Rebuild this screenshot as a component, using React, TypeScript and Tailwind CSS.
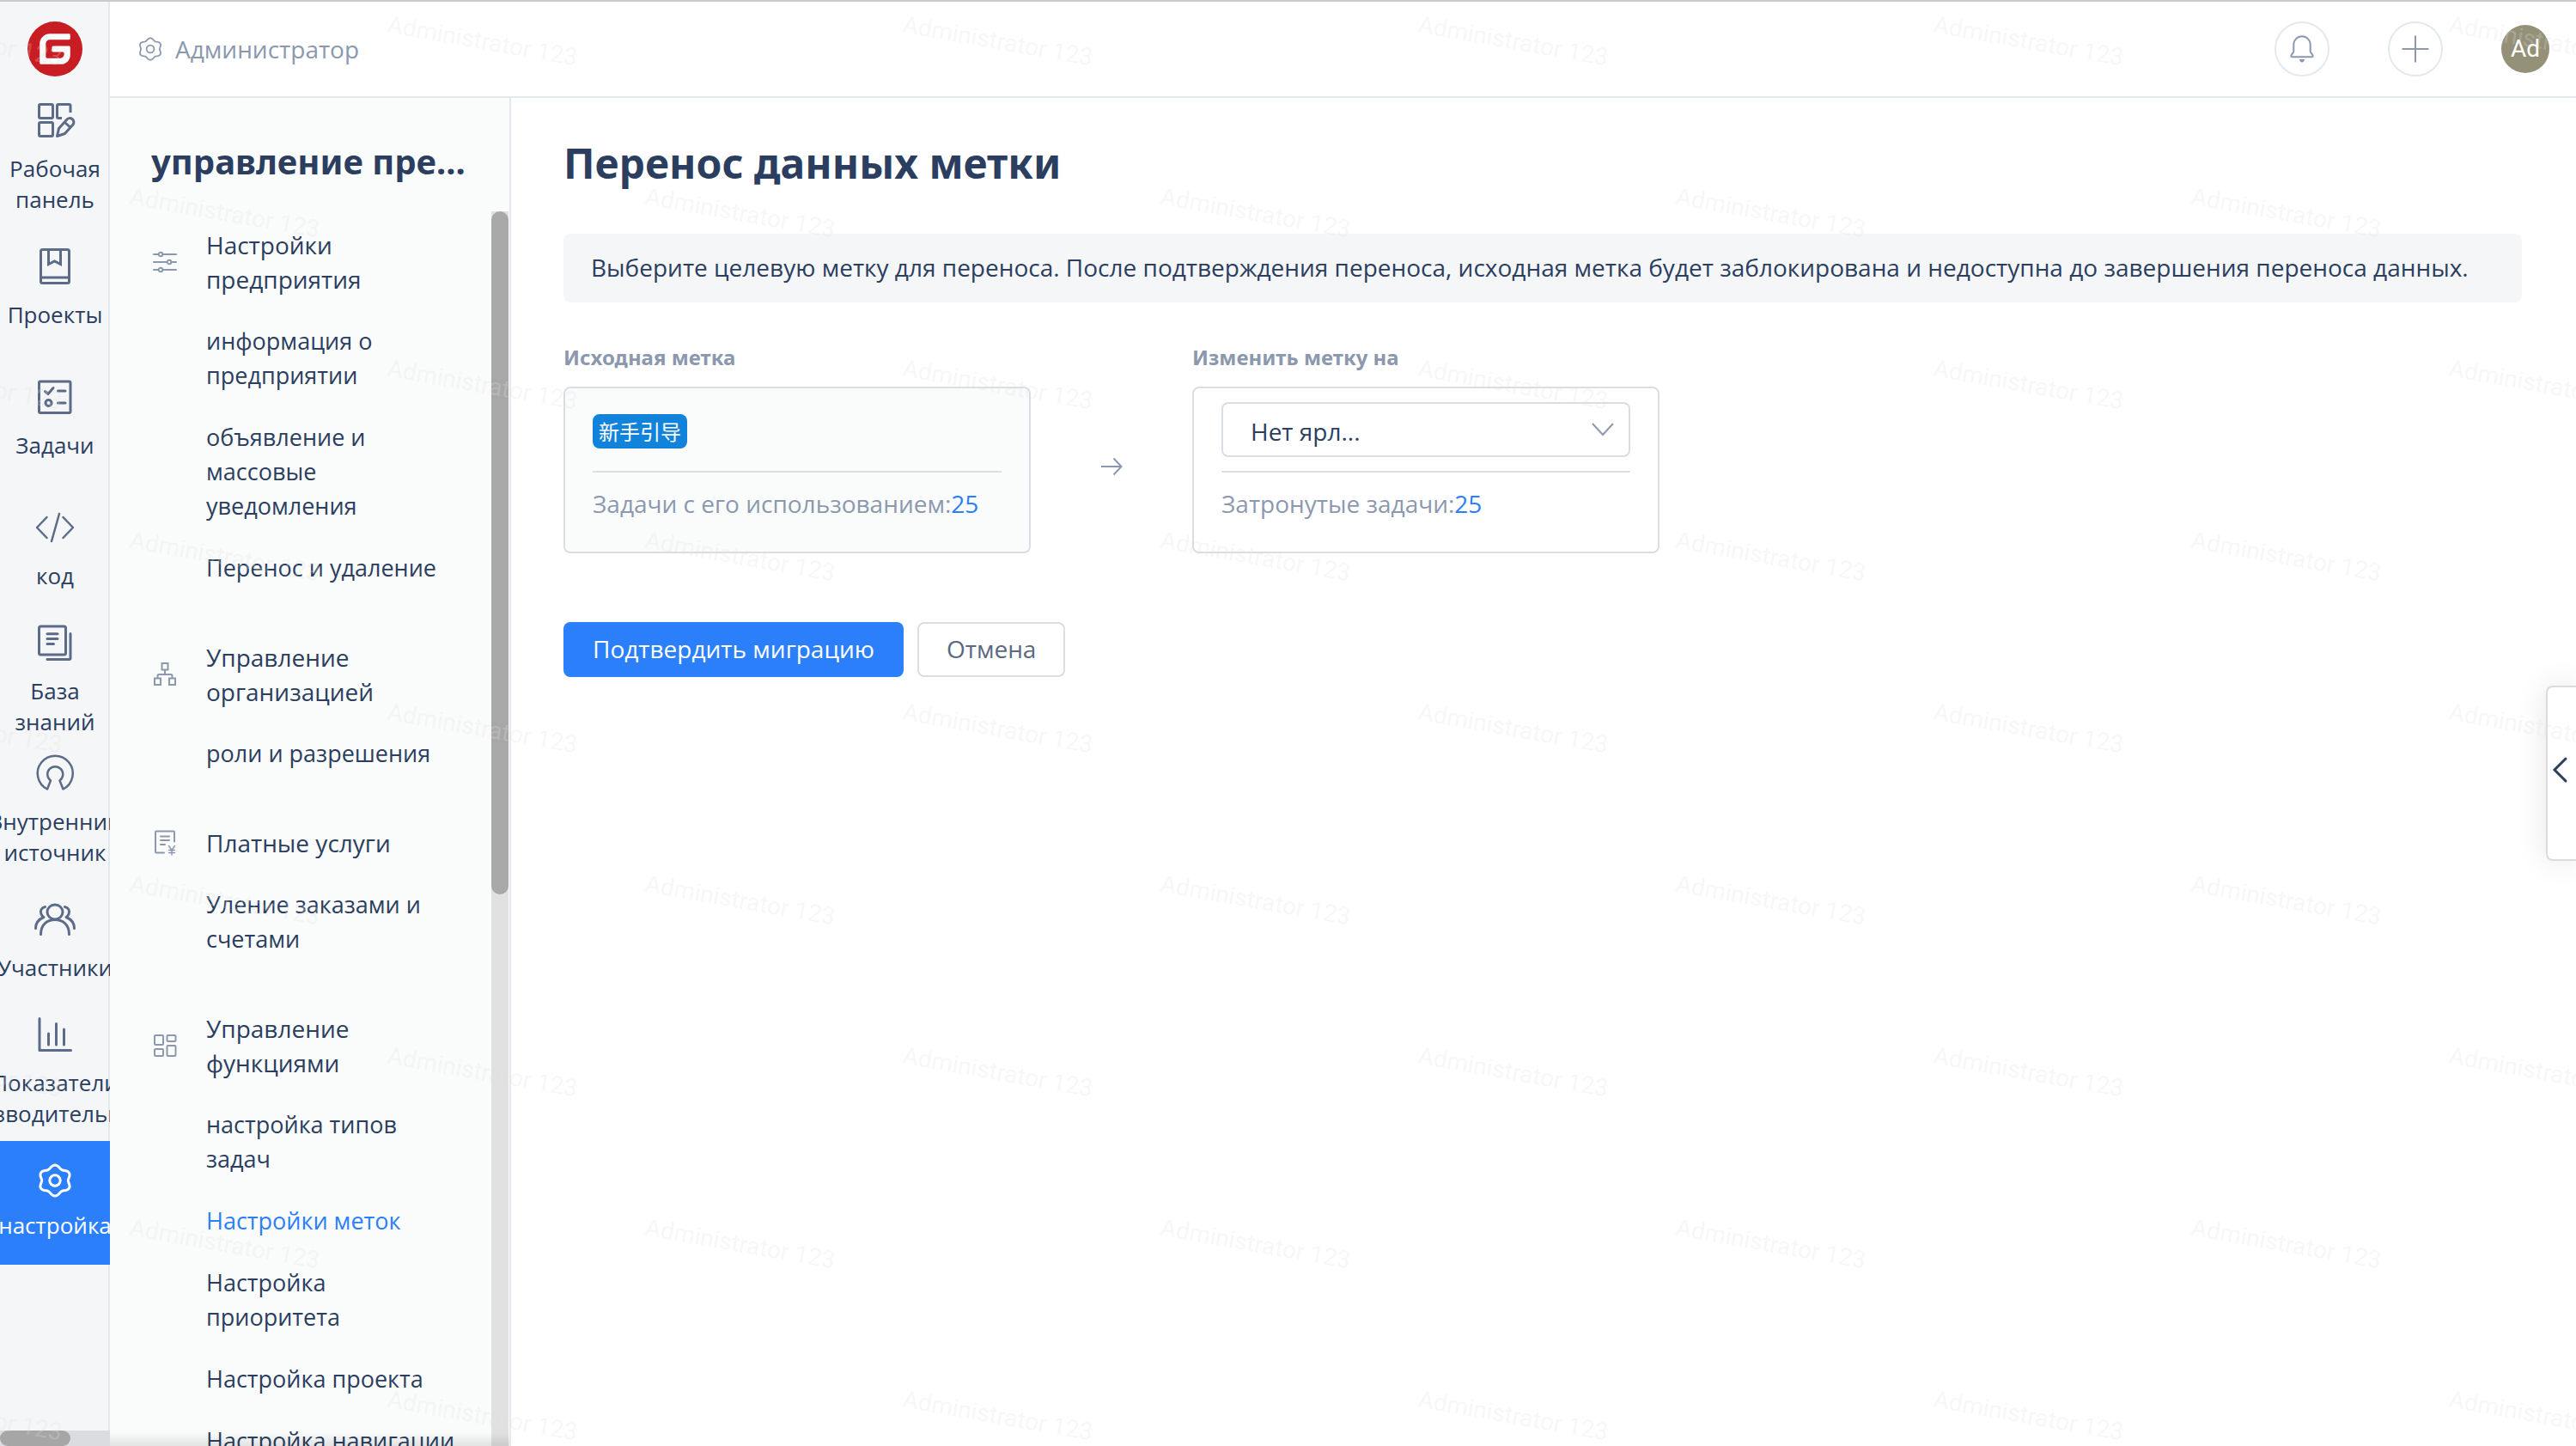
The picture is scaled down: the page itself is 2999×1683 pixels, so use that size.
import React from 'react';
import { SiGitee } from 'react-icons/si';

type IconProps = { children: React.ReactNode; size?: 'nav' | 'menu' };

function Icon({ children, size = 'nav' }: IconProps) {
  const nav = size === 'nav';
  return (
    <svg
      aria-hidden="true"
      viewBox={nav ? '0 0 48 48' : '0 0 32 32'}
      className={nav ? 'size-12 shrink-0' : 'size-8 shrink-0'}
      fill="none"
      stroke="currentColor"
      strokeWidth={nav ? 3 : 2}
      strokeLinecap="round"
      strokeLinejoin="round"
    >
      {children}
    </svg>
  );
}

// Six-lobed cog outline centred in a 48px box.
const cogPath =
  Array.from({ length: 120 }, (_, i) => {
    const a = (i / 120) * Math.PI * 2;
    const r = 16.2 + 1.7 * Math.cos(6 * (a - Math.PI / 2));
    const x = (24 + r * Math.cos(a) * 1.06).toFixed(2);
    const y = (24 + r * Math.sin(a)).toFixed(2);
    return `${i ? 'L' : 'M'}${x} ${y}`;
  }).join('') + 'Z';

const Cog = () => (
  <>
    <path d={cogPath} />
    <circle cx="24" cy="24" r="6.2" />
  </>
);

const navItems: { lines: string[]; icon: React.ReactNode; active?: boolean }[] = [
  {
    lines: ['Рабочая', 'панель'],
    icon: (
      <>
        <rect x="5.5" y="5.5" width="16" height="16" rx="1.5" />
        <rect x="5.5" y="26.5" width="16" height="16" rx="1.5" />
        <path d="M42 15V7a1.5 1.5 0 0 0-1.5-1.5H28A1.5 1.5 0 0 0 26.5 7v13a1.5 1.5 0 0 0 1.5 1.5h4" strokeLinecap="butt" />
        <path d="M26.5 42.5L28.5 33.5 37.5 23.5a4.6 4.6 0 0 1 7.5 5.5L35.5 39.5Z M35.5 26.5l6 5.5" />
      </>
    ),
  },
  {
    lines: ['Проекты'],
    icon: (
      <>
        <rect x="7.5" y="4.5" width="33" height="39" rx="2" />
        <path d="M7.5 37h33M16.5 4.5v17l7-3.5 7 3.5v-17" strokeLinejoin="miter" />
      </>
    ),
  },
  {
    lines: ['Задачи'],
    icon: (
      <>
        <rect x="5.5" y="6" width="36.5" height="36.5" rx="1.5" />
        <path d="M12.5 17.5l3.5 3 6-7M27.5 17h8.5M27.5 31h8.5" />
        <circle cx="16.5" cy="31" r="3.5" />
      </>
    ),
  },
  {
    lines: ['код'],
    icon: <path d="M14.5 12L3 24l11.5 12M33.5 12L45 24 33.5 36M29 8l-9 32" strokeWidth="2.5" />,
  },
  {
    lines: ['База', 'знаний'],
    icon: (
      <>
        <rect x="5.5" y="5" width="31" height="33" rx="2" />
        <path d="M42 13.5V42a1.5 1.5 0 0 1-1.5 1.5H15M15 13.8h12M15 19.6h12M15 25.4h7.5" />
      </>
    ),
  },
  {
    lines: ['Внутренний', 'источник'],
    icon: (
      <path
        d="M15 42.5A20.5 20.5 0 1 1 33.5 42.5L29.5 32.5A9 9 0 1 0 19 32.5Z"
        strokeWidth="2.5"
      />
    ),
  },
  {
    lines: ['Участники'],
    icon: (
      <>
        <ellipse cx="24" cy="15.5" rx="9" ry="8.5" />
        <path d="M7.5 41.5C7.5 31 14 24.5 24 24.5S40.5 31 40.5 41.5" />
        <path d="M12.5 9.5C8 10.5 6.5 14 8 18c.6 1.6 1.5 2.6 3 3.5C5 24 1.5 28 1.5 34.5" />
        <path d="M35.5 9.5C40 10.5 41.5 14 40 18c-.6 1.6-1.5 2.6-3 3.5C43 24 46.5 28 46.5 34.5" />
      </>
    ),
  },
  {
    lines: ['Показатели', 'производительности'],
    icon: <path d="M6 5.5V42.5H42.5M16.5 23v13M25.5 11.5V36M34.5 18v18" />,
  },
  { lines: ['настройка'], icon: <Cog />, active: true },
];

type Group = { title: string; icon: React.ReactNode; items: string[] };

const groups: Group[] = [
  {
    title: 'Настройки предприятия',
    icon: (
      <path d="M3 7h5.5M13.5 7H29M3 16h15.5M23.5 16H29M3 25h5.5M13.5 25H29M11 4.7a2.3 2.3 0 1 0 0 4.6 2.3 2.3 0 0 0 0-4.6ZM21 13.7a2.3 2.3 0 1 0 0 4.6 2.3 2.3 0 0 0 0-4.6ZM11 22.7a2.3 2.3 0 1 0 0 4.6 2.3 2.3 0 0 0 0-4.6Z" />
    ),
    items: ['информация о предприятии', 'объявление и массовые уведомления', 'Перенос и удаление'],
  },
  {
    title: 'Управление организацией',
    icon: (
      <g strokeLinejoin="miter">
        <rect x="12.5" y="3" width="7" height="7.5" />
        <rect x="4" y="20.5" width="7" height="7.5" />
        <rect x="21" y="20.5" width="7" height="7.5" />
        <path d="M16 10.5V16M7.5 20V17.5A1.5 1.5 0 0 1 9 16h14a1.5 1.5 0 0 1 1.5 1.5V20" strokeLinecap="butt" />
      </g>
    ),
    items: ['роли и разрешения'],
  },
  {
    title: 'Платные услуги',
    icon: (
      <>
        <path d="M27 14.5V3.5a1 1 0 0 0-1-1H6a1 1 0 0 0-1 1v23a1 1 0 0 0 1 1h9M11 8.5h10M11 13h10M11 18h5" />
        <path d="M20.5 19.5l3.5 5 3.5-5M24 24.5V30M20.5 24.5h7M20.5 27.5h7" strokeWidth="1.5" />
      </>
    ),
    items: ['Уление заказами и счетами'],
  },
  {
    title: 'Управление функциями',
    icon: (
      <>
        <rect x="4" y="4" width="10" height="11" rx="1" />
        <rect x="18.5" y="4" width="10" height="7" rx="1" />
        <rect x="4" y="20" width="10" height="8" rx="1" />
        <rect x="18.5" y="16" width="10" height="12" rx="1" />
      </>
    ),
    items: ['настройка типов задач', 'Настройки меток', 'Настройка приоритета', 'Настройка проекта', 'Настройка\u00a0навигации'],
  },
];

function Sidebar() {
  return (
    <nav className="relative flex w-32 shrink-0 flex-col overflow-hidden bg-[#f4f6f8]">
      <div className="flex h-28 shrink-0 items-center justify-center pt-0.5">
        <a href="#home" aria-label="Gitee" className="flex size-16 items-center justify-center rounded-full">
          <span className="rounded-full bg-[radial-gradient(circle,#fbfbfb_60%,transparent_62%)] text-[#c71d23]">
            <SiGitee className="size-16" />
          </span>
        </a>
      </div>
      <div className="absolute inset-y-0 right-0 w-0.5 bg-[#e3e9ed]" />
      <ul className="relative flex flex-col gap-2">
        {navItems.map((item) => (
          <li key={item.lines[0]}>
            <a
              href={`#${item.lines[0]}`}
              className={
                item.active
                  ? 'flex h-36 flex-col items-center justify-center bg-[#2b7ffb] pb-1.5 text-white'
                  : 'flex h-36 flex-col items-center justify-center pb-0.5 text-[#2c3e60]'
              }
            >
              <span className={item.active ? 'mb-2.5 text-white' : 'mb-3.5 text-[#5c6b87]'}>
                <Icon>{item.icon}</Icon>
              </span>
              {item.lines.map((line) => (
                <span key={line} className="text-[26px] leading-9 whitespace-nowrap">
                  {line}
                </span>
              ))}
            </a>
          </li>
        ))}
      </ul>
      <div className="absolute inset-x-0 bottom-0 h-[18px] bg-[#dbdcdf]">
        <div className="h-full w-[82px] rounded-full bg-[#a6a6a7]" />
      </div>
    </nav>
  );
}

function Header() {
  return (
    <header className="flex h-[114px] shrink-0 items-center border-t-2 border-b-2 border-t-[#cbcbcb] border-b-[#e3e9ed] bg-white pr-[31px] pl-[30px] text-[#8c98ae]">
      <a href="#admin" className="flex items-center gap-3 text-[28px] leading-10">
        <svg aria-hidden="true" viewBox="0 0 48 48" className="size-[34px]" fill="none" stroke="currentColor" strokeWidth="2.5">
          <Cog />
        </svg>
        Администратор
      </a>
      <div className="ml-auto flex items-center gap-[68px]">
        <button aria-label="Уведомления" className="flex size-16 items-center justify-center rounded-full border-2 border-[#e3e9ed]">
          <svg viewBox="0 0 40 40" className="size-10 shrink-0" fill="none" stroke="currentColor" strokeWidth="2" strokeLinejoin="round">
            <path d="M10.3 22.5V15a9.7 9.7 0 0 1 19.4 0V22.5c0 2 3 4 3 5.5 0 1-.4 1.3-1.3 1.3H8.6c-.9 0-1.3-.3-1.3-1.3 0-1.5 3-3.5 3-5.5Z" />
            <path d="M17 32h6c0 2-1.4 3.5-3 3.5S17 34 17 32Z" fill="currentColor" stroke="none" />
          </svg>
        </button>
        <button aria-label="Создать" className="flex size-16 items-center justify-center rounded-full border-2 border-[#e3e9ed]">
          <svg viewBox="0 0 32 32" className="size-8 shrink-0" fill="none" stroke="currentColor" strokeWidth="2">
            <path d="M16 0.5V31.5M0.5 16H31.5" />
          </svg>
        </button>
        <button className="flex size-14 items-center justify-center rounded-full bg-[#959179] font-['Roboto',sans-serif] text-[28px] leading-none text-white">
          Ad
        </button>
      </div>
    </header>
  );
}

function SettingsMenu() {
  return (
    <aside className="relative flex w-[467px] shrink-0 flex-col overflow-hidden border-r-2 border-[#e3e9ed] bg-[#fafcfb] pr-px">
      <h2 className="h-[132px] shrink-0 truncate pt-11 pl-12 font-['Noto_Sans',sans-serif] text-[40px] leading-[60px] font-bold">
        управление пре...
      </h2>
      <div className="flex min-h-0 flex-1">
        <div className="flex min-w-0 flex-1 flex-col gap-8 overflow-hidden pt-[3px] pl-12">
          {groups.map((group) => (
            <section key={group.title} className="shrink-0">
              <h3 className="flex items-center gap-8 py-4 text-[28px] leading-10">
                <span className="text-[#8c98ae]">
                  <Icon size="menu">{group.icon}</Icon>
                </span>
                <span className="w-[288px]">{group.title}</span>
              </h3>
              <ul className="ml-16 w-[288px]">
                {group.items.map((item) => (
                  <li key={item}>
                    <a
                      href={`#${item}`}
                      className={
                        item === 'Настройки меток'
                          ? 'block py-4 text-[27px] leading-10 text-[#2b7ffb]'
                          : 'block py-4 text-[27px] leading-10'
                      }
                    >
                      {item}
                    </a>
                  </li>
                ))}
              </ul>
            </section>
          ))}
        </div>
        <div className="w-5 shrink-0 bg-[#e1e1e1]">
          <div className="h-[55.3%] rounded-full bg-[#a8a8a8]" />
        </div>
      </div>
      <div className="pointer-events-none absolute inset-x-0 bottom-0 h-4 bg-gradient-to-b from-transparent to-black/10" />
    </aside>
  );
}

function Content() {
  return (
    <main className="min-w-0 flex-1 pt-10 pr-[63px] pl-[61px]">
      <h1 className="font-['Noto_Sans',sans-serif] text-[48px] leading-[72px] font-bold">Перенос данных метки</h1>
      <p className="mt-[46px] rounded-lg bg-[#f4f6f8] px-8 pt-[19px] pb-[21px] text-[28px] leading-10">
        Выберите целевую метку для переноса. После подтверждения переноса, исходная метка будет заблокирована и
        недоступна до завершения переноса данных.
      </p>
      <div className="mt-[46px] flex items-end text-[28px] leading-10 text-[#8c98ae]">
        <section className="w-[544px]">
          <h2 className="font-['Noto_Sans',sans-serif] text-[24px] leading-9 font-bold">Исходная метка</h2>
          <div className="mt-4 rounded-lg border-2 border-[#dadde3] bg-[#fafcfb] px-8 pb-9">
            <div className="flex h-[98px] items-center border-b-2 border-[#dadde3] pt-1">
              <span className="rounded-lg bg-[#1283da] px-[7px] py-0.5 font-['Noto_Sans_CJK_SC',sans-serif] text-[24px] leading-9 text-white">
                新手引导
              </span>
            </div>
            <p className="pt-4">
              Задачи с его использованием:
              <a href="#source-tasks" className="text-[#2b7ffb]">25</a>
            </p>
          </div>
        </section>
        <div className="flex h-[194px] w-[188px] items-center justify-center pb-2">
          <svg aria-hidden="true" viewBox="0 0 26 24" className="h-6 w-[26px]" fill="none" stroke="currentColor" strokeWidth="2">
            <path d="M1 12H24M15.5 2.5L24.5 12l-9 9.5" />
          </svg>
        </div>
        <section className="w-[544px]">
          <label htmlFor="target-label" className="block font-['Noto_Sans',sans-serif] text-[24px] leading-9 font-bold">
            Изменить метку на
          </label>
          <div className="mt-4 rounded-lg border-2 border-[#dadde3] bg-white px-8 pb-9">
            <div className="relative flex h-[98px] items-center border-b-2 border-[#dadde3]">
              <select
                id="target-label"
                className="h-16 w-full appearance-none rounded-lg border-2 border-[#dadde3] bg-white pt-1 pl-8 text-[28px] text-[#2c3e60]"
              >
                <option>Нет ярл...</option>
              </select>
              <svg
                aria-hidden="true"
                viewBox="0 0 26 16"
                className="pointer-events-none absolute right-[19px] h-4 w-[26px]"
                fill="none"
                stroke="currentColor"
                strokeWidth="2"
              >
                <path d="M1 1L13 14 25 1" />
              </svg>
            </div>
            <p className="pt-4">
              Затронутые задачи:
              <a href="#target-tasks" className="text-[#2b7ffb]">25</a>
            </p>
          </div>
        </section>
      </div>
      <div className="mt-20 flex gap-4 text-[28px] leading-10">
        <button className="h-16 rounded-lg bg-[#2b7ffb] px-[34px] pb-0.5 text-white">Подтвердить миграцию</button>
        <button className="h-16 rounded-lg border-2 border-[#dadde3] bg-white px-8 pb-0.5 text-[#5a6882]">Отмена</button>
      </div>
    </main>
  );
}

// Repeating user name laid over the whole window in staggered rows.
function Watermark() {
  const marks = Array.from({ length: 9 }, (_, row) =>
    Array.from({ length: 6 }, (_, col) => ({ left: (row % 2 ? 154 : -146) + col * 600, top: 13 + row * 200 })),
  ).flat();
  return (
    <div aria-hidden="true" className="pointer-events-none absolute inset-0 overflow-hidden select-none">
      {marks.map((mark) => (
        <span
          key={`${mark.left}-${mark.top}`}
          className="absolute origin-top-left rotate-10 font-['Roboto',sans-serif] text-[28px] leading-8 whitespace-nowrap text-[#e0e0e0]/25"
          style={mark}
        >
          Administrator 123
        </span>
      ))}
    </div>
  );
}

export default function App() {
  return (
    <div className="relative flex h-screen overflow-hidden bg-white font-['Open_Sans','Noto_Sans',sans-serif] text-[#2c3e60]">
      <Sidebar />
      <div className="flex min-w-0 flex-1 flex-col">
        <Header />
        <div className="flex min-h-0 flex-1">
          <SettingsMenu />
          <Content />
        </div>
      </div>
      <div className="absolute inset-x-0 top-0 h-0.5 bg-[#cbcbcb]" />
      <button
        aria-label="Открыть панель"
        className="absolute top-[798px] right-0 flex h-[204px] w-[35px] items-center rounded-l-lg border-2 border-r-0 border-[#dcdcdc] bg-white pb-2 pl-1 shadow-[0_0_36px_rgba(0,0,0,0.1)]"
      >
        <svg viewBox="0 0 20 32" className="h-8 w-5" fill="none" stroke="#2c3e60" strokeWidth="3" strokeLinecap="round">
          <path d="M17 3L4 16 17 29" />
        </svg>
      </button>
      <Watermark />
    </div>
  );
}
